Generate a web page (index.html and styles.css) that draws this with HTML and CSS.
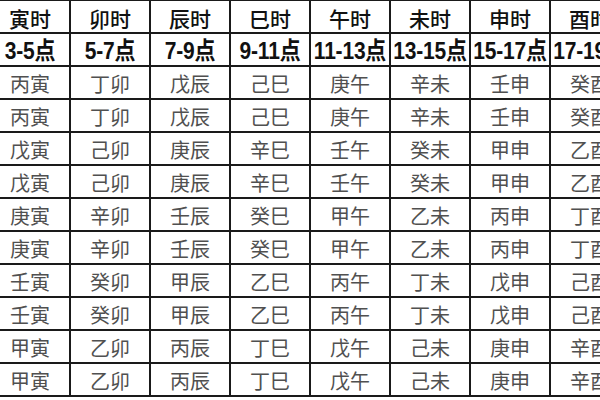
FILE: index.html
```html
<!DOCTYPE html>
<html lang="zh">
<head>
<meta charset="utf-8">
<link rel="stylesheet" href="styles.css">
</head>
<body>
<div class="grid">
  <div class="cell head">寅时</div><div class="cell head">卯时</div><div class="cell head">辰时</div><div class="cell head">巳时</div><div class="cell head">午时</div><div class="cell head">未时</div><div class="cell head">申时</div><div class="cell head">酉时</div>
  <div class="cell hour"><span class="tall">3-5点</span></div><div class="cell hour"><span class="tall">5-7点</span></div><div class="cell hour"><span class="tall">7-9点</span></div><div class="cell hour"><span class="tall">9-11点</span></div><div class="cell hour"><span class="tall">11-13点</span></div><div class="cell hour"><span class="tall">13-15点</span></div><div class="cell hour"><span class="tall">15-17点</span></div><div class="cell hour"><span class="tall">17-19点</span></div>
  <div class="cell">丙寅</div><div class="cell">丁卯</div><div class="cell">戊辰</div><div class="cell">己巳</div><div class="cell">庚午</div><div class="cell">辛未</div><div class="cell">壬申</div><div class="cell">癸酉</div>
  <div class="cell">丙寅</div><div class="cell">丁卯</div><div class="cell">戊辰</div><div class="cell">己巳</div><div class="cell">庚午</div><div class="cell">辛未</div><div class="cell">壬申</div><div class="cell">癸酉</div>
  <div class="cell">戊寅</div><div class="cell">己卯</div><div class="cell">庚辰</div><div class="cell">辛巳</div><div class="cell">壬午</div><div class="cell">癸未</div><div class="cell">甲申</div><div class="cell">乙酉</div>
  <div class="cell">戊寅</div><div class="cell">己卯</div><div class="cell">庚辰</div><div class="cell">辛巳</div><div class="cell">壬午</div><div class="cell">癸未</div><div class="cell">甲申</div><div class="cell">乙酉</div>
  <div class="cell">庚寅</div><div class="cell">辛卯</div><div class="cell">壬辰</div><div class="cell">癸巳</div><div class="cell">甲午</div><div class="cell">乙未</div><div class="cell">丙申</div><div class="cell">丁酉</div>
  <div class="cell">庚寅</div><div class="cell">辛卯</div><div class="cell">壬辰</div><div class="cell">癸巳</div><div class="cell">甲午</div><div class="cell">乙未</div><div class="cell">丙申</div><div class="cell">丁酉</div>
  <div class="cell">壬寅</div><div class="cell">癸卯</div><div class="cell">甲辰</div><div class="cell">乙巳</div><div class="cell">丙午</div><div class="cell">丁未</div><div class="cell">戊申</div><div class="cell">己酉</div>
  <div class="cell">壬寅</div><div class="cell">癸卯</div><div class="cell">甲辰</div><div class="cell">乙巳</div><div class="cell">丙午</div><div class="cell">丁未</div><div class="cell">戊申</div><div class="cell">己酉</div>
  <div class="cell">甲寅</div><div class="cell">乙卯</div><div class="cell">丙辰</div><div class="cell">丁巳</div><div class="cell">戊午</div><div class="cell">己未</div><div class="cell">庚申</div><div class="cell">辛酉</div>
  <div class="cell">甲寅</div><div class="cell">乙卯</div><div class="cell">丙辰</div><div class="cell">丁巳</div><div class="cell">戊午</div><div class="cell">己未</div><div class="cell">庚申</div><div class="cell">辛酉</div>
</div>
</body>
</html>
```
FILE: styles.css
```css
html, body {
  margin: 0;
  padding: 0;
  background: #fff;
  width: 600px;
  height: 400px;
  overflow: hidden;
}

.grid {
  display: grid;
  grid-template-columns: repeat(8, 78px);
  grid-auto-rows: 31px;
  gap: 2px;
  padding: 2px;
  background: #1a1a1a;
  width: max-content;
  margin: -1px 0 0 -11px;
}

.cell {
  background: #fff;
  display: flex;
  align-items: center;
  justify-content: center;
  padding-top: 3px;
  box-sizing: border-box;
  white-space: nowrap;
  font-family: "Noto Sans CJK SC", "Liberation Sans", sans-serif;
  font-size: 20px;
  color: #505050;
  line-height: 1;
}

.head {
  color: #111;
  font-weight: 500;
  font-size: 21px;
}

.hour {
  font-family: "Liberation Sans", "Noto Sans CJK SC", sans-serif;
  font-weight: bold;
  color: #111;
  font-size: 21px;
  letter-spacing: -0.2px;
  padding-top: 2px;
}

.tall {
  display: inline-block;
  transform: scaleY(1.15);
}
```
